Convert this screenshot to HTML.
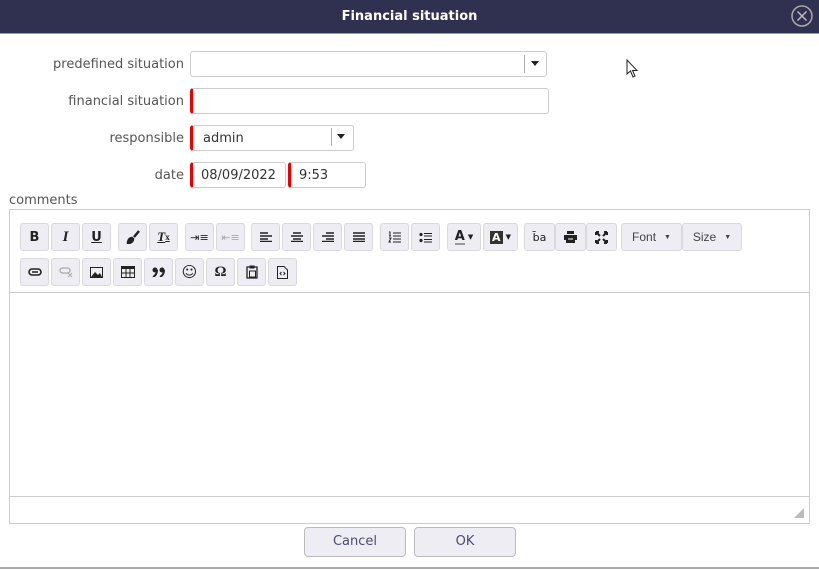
<!DOCTYPE html>
<html><head><style>
*{box-sizing:border-box;margin:0;padding:0}
body{width:819px;height:570px;background:#fff;font-family:"DejaVu Sans","Liberation Sans",sans-serif;position:relative;overflow:hidden;color:#444}
.abs{position:absolute}
.title{left:0;top:0;width:819px;height:34px;background:#303050;border-bottom:1px solid #9a9aa8;color:#fff;font-weight:bold;font-size:13px;text-align:center;line-height:33px}
.lbl{font-size:13px;color:#555;text-align:right;width:184px;left:0}
.inp{border:1px solid #ccc;border-radius:3px;height:26px;font-size:13px;line-height:24px;padding-left:10px;color:#333}
.req{border-left:3px solid #e00}
.tb{position:absolute;height:28px;width:29px;background:#ededf3;border:1px solid #d8d8de;border-radius:3px;display:flex;align-items:center;justify-content:center;font-size:13px;color:#222}
.btn{position:absolute;top:527px;height:30px;width:102px;background:#ededf3;border:1px solid #bbb;border-radius:4px;text-align:center;line-height:28px;font-size:13px;color:#4a4a70}
</style></head><body>
<div class="abs title">Financial situation</div>
<svg class="abs" style="left:790px;top:4px" width="24" height="24"><circle cx="12" cy="12" r="10" fill="none" stroke="#aaa" stroke-width="1.5"/><path d="M7.5 7.5L16.5 16.5M16.5 7.5L7.5 16.5" stroke="#bbb" stroke-width="1.5"/></svg>
<svg class="abs" style="left:626px;top:59px" width="14" height="22"><path d="M1 1L1 15L4.5 12L7 18L9 17L6.5 11.5L11 11.5Z" fill="#fff" stroke="#222" stroke-width="1"/></svg>

<div class="abs lbl" style="top:57px">predefined situation</div>
<div class="abs inp" style="left:190px;top:51px;width:357px"></div>
<div class="abs" style="left:524px;top:55px;width:1px;height:18px;background:#aaa"></div>
<div class="abs" style="left:531px;top:61px;border:4px solid transparent;border-top:5px solid #222;border-bottom:0"></div>

<div class="abs lbl" style="top:94px">financial situation</div>
<div class="abs inp req" style="left:190px;top:88px;width:359px"></div>

<div class="abs lbl" style="top:131px">responsible</div>
<div class="abs inp req" style="left:190px;top:125px;width:164px;padding-top:1px">admin</div>
<div class="abs" style="left:331px;top:128px;width:1px;height:18px;background:#aaa"></div>
<div class="abs" style="left:337px;top:134px;border:4px solid transparent;border-top:5px solid #222;border-bottom:0"></div>

<div class="abs lbl" style="top:168px">date</div>
<div class="abs inp req" style="left:190px;top:162px;width:96px;padding-left:8px;padding-top:1px">08/09/2022</div>
<div class="abs inp req" style="left:288px;top:162px;width:78px;padding-left:8px;padding-top:1px">9:53</div>

<div class="abs" style="left:9px;top:193px;font-size:13px;color:#555">comments</div>
<div class="abs" style="left:9px;top:209px;width:801px;height:315px;border:1px solid #ccc"></div>
<div class="abs" style="left:10px;top:292px;width:799px;height:1px;background:#ccc"></div>
<div class="abs" style="left:10px;top:496px;width:799px;height:1px;background:#ccc"></div>
<svg class="abs" style="left:794px;top:508px" width="10" height="10"><path d="M10 0L10 10L0 10Z" fill="#bbb"/></svg>

<div class="tb" style="left:20px;top:223px;font-weight:bold">B</div>
<div class="tb" style="left:51px;top:223px;font-style:italic;font-weight:bold;font-family:'Liberation Serif',serif;font-size:15px">I</div>
<div class="tb" style="left:82px;top:223px;font-weight:bold;text-decoration:underline">U</div>
<div class="tb" style="left:118px;top:223px"><svg width="14" height="14"><path d="M13 1L8 7M2 13C2 10 4 8 6 8L7 9C7 11 5 13 2 13Z" stroke="#222" stroke-width="2.5" fill="#222"/></svg></div>
<div class="tb" style="left:149px;top:223px;font-style:italic;font-weight:bold;font-family:'Liberation Serif',serif;text-decoration:underline">T<span style="font-size:9px;font-style:normal">x</span></div>
<div class="tb" style="left:185px;top:223px;font-size:11px">⇥≡</div>
<div class="tb" style="left:216px;top:223px;font-size:11px;color:#aaa">⇤≡</div>
<div class="tb" style="left:251px;top:223px"><svg width="12" height="10"><path d="M0 1H8M0 4H12M0 7H8M0 9.5H12" stroke="#222" stroke-width="1.5"/></svg></div>
<div class="tb" style="left:282px;top:223px"><svg width="12" height="10"><path d="M2 1H10M0 4H12M2 7H10M0 9.5H12" stroke="#222" stroke-width="1.5"/></svg></div>
<div class="tb" style="left:313px;top:223px"><svg width="12" height="10"><path d="M4 1H12M0 4H12M4 7H12M0 9.5H12" stroke="#222" stroke-width="1.5"/></svg></div>
<div class="tb" style="left:344px;top:223px"><svg width="12" height="10"><path d="M0 1H12M0 4H12M0 7H12M0 9.5H12" stroke="#222" stroke-width="1.5"/></svg></div>
<div class="tb" style="left:380px;top:223px"><svg width="13" height="12"><path d="M1 1H2V5M1 5H3M1 7H3L1 11H3M5 2H13M5 5H13M5 8H13M5 11H13" stroke="#222" stroke-width="1" fill="none"/></svg></div>
<div class="tb" style="left:411px;top:223px"><svg width="13" height="11"><circle cx="2" cy="2.5" r="1.6" fill="#222"/><circle cx="2" cy="8.5" r="1.6" fill="#222"/><path d="M5 1.5H13M5 4H13M5 7.5H13M5 10H13" stroke="#222" stroke-width="1"/></svg></div>
<div class="tb" style="left:447px;top:223px;width:34px;font-weight:bold"><span style="border-bottom:2px solid #999;line-height:13px">A</span><span style="font-size:7px;margin-left:3px">▼</span></div>
<div class="tb" style="left:483px;top:223px;width:35px"><span style="background:#333;color:#fff;font-weight:bold;font-size:11px;padding:0 2px">A</span><span style="font-size:7px;margin-left:3px">▼</span></div>
<div class="tb" style="left:524px;top:223px;width:31px;font-size:11px">b̄a</div>
<div class="tb" style="left:555px;top:223px;width:31px"><svg width="13" height="12"><path d="M3 0H10V3H3Z M0 4H13V9H11V12H2V9H0Z" fill="#222"/><path d="M4 8H9" stroke="#fff"/></svg></div>
<div class="tb" style="left:586px;top:223px;width:31px"><svg width="13" height="13"><path d="M1 1L5 5M12 1L8 5M1 12L5 8M12 12L8 8M1 1H4M1 1V4M12 1H9M12 1V4M1 12H4M1 12V9M12 12H9M12 12V9" stroke="#222" stroke-width="2"/></svg></div>
<div class="tb" style="left:621px;top:223px;width:61px;font-family:'Liberation Sans',sans-serif;font-size:12px;color:#444">Font <span style="font-size:7px;margin-left:8px">▼</span></div>
<div class="tb" style="left:682px;top:223px;width:60px;font-family:'Liberation Sans',sans-serif;font-size:12px;color:#444">Size <span style="font-size:7px;margin-left:8px">▼</span></div>

<div class="tb" style="left:20px;top:258px"><svg width="14" height="8"><rect x="1" y="1" width="12" height="6" rx="3" fill="none" stroke="#222" stroke-width="1.6"/><path d="M4 4H10" stroke="#222" stroke-width="1.5"/></svg></div>
<div class="tb" style="left:51px;top:258px"><svg width="14" height="11"><rect x="1" y="1" width="10" height="5" rx="2.5" fill="none" stroke="#aaa" stroke-width="1.3"/><path d="M9 6L13 10M13 6L9 10" stroke="#aaa"/></svg></div>
<div class="tb" style="left:82px;top:258px"><svg width="13" height="11"><rect x="0.5" y="0.5" width="12" height="10" fill="none" stroke="#222"/><path d="M1 10L5 5L8 8L10 6L12 10Z" fill="#222"/></svg></div>
<div class="tb" style="left:113px;top:258px"><svg width="14" height="12"><rect x="0.5" y="0.5" width="13" height="11" fill="none" stroke="#222"/><rect x="0" y="0" width="14" height="3" fill="#222"/><path d="M5 3V12M9 3V12M0 7H14" stroke="#222"/></svg></div>
<div class="tb" style="left:144px;top:258px"><svg width="14" height="10"><circle cx="3" cy="3" r="2.5" fill="#222"/><circle cx="10" cy="3" r="2.5" fill="#222"/><path d="M5 3Q5 8 1 10M12 3Q12 8 8 10" stroke="#222" stroke-width="2" fill="none"/></svg></div>
<div class="tb" style="left:175px;top:258px;font-size:15px">☺</div>
<div class="tb" style="left:206px;top:258px;font-weight:bold;font-family:'Liberation Serif',serif;font-size:15px">Ω</div>
<div class="tb" style="left:237px;top:258px"><svg width="12" height="14"><path d="M1 2H11V13H1Z" fill="none" stroke="#222" stroke-width="1.3"/><rect x="3.5" y="0.5" width="5" height="3" fill="#222"/><rect x="3.5" y="6" width="6" height="6" fill="none" stroke="#222"/></svg></div>
<div class="tb" style="left:268px;top:258px"><svg width="11" height="13"><path d="M0.5 0.5H7L10.5 4V12.5H0.5Z" fill="none" stroke="#222"/><path d="M4.5 6L3 7.5L4.5 9M6.5 6L8 7.5L6.5 9" stroke="#222" fill="none"/></svg></div>

<div class="btn" style="left:304px">Cancel</div>
<div class="btn" style="left:414px">OK</div>
<div class="abs" style="left:0;top:567px;width:819px;height:2px;background:#aaa"></div>
</body></html>
